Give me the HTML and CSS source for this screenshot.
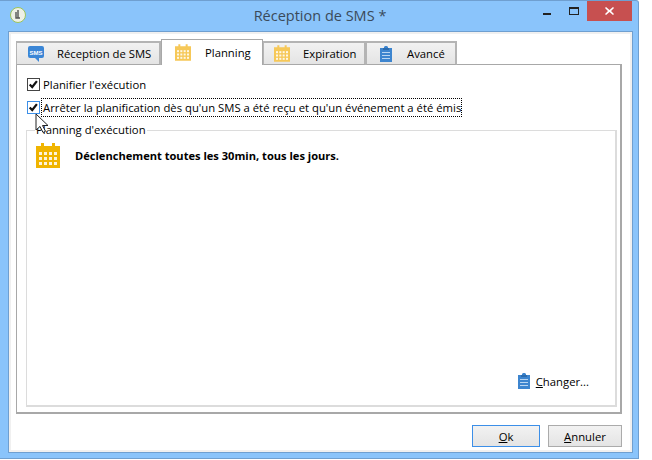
FILE: index.html
```html
<!DOCTYPE html>
<html lang="fr">
<head>
<meta charset="utf-8">
<title>Réception de SMS</title>
<link rel="stylesheet" href="styles.css">
</head>
<body>
<svg width="0" height="0" class="defs">
  <defs>
    <symbol id="cal" viewBox="0 0 24 25">
      <path d="M0 3h5V0h3v3h8V0h3v3h5v22H0z" fill="currentColor"/>
      <g fill="#fff" fill-opacity=".85">
        <rect x="3" y="9" width="3" height="3"/><rect x="8" y="9" width="3" height="3"/><rect x="13" y="9" width="3" height="3"/><rect x="18" y="9" width="3" height="3"/>
        <rect x="3" y="14" width="3" height="3"/><rect x="8" y="14" width="3" height="3"/><rect x="13" y="14" width="3" height="3"/><rect x="18" y="14" width="3" height="3"/>
        <rect x="3" y="19" width="3" height="3"/><rect x="8" y="19" width="3" height="3"/><rect x="13" y="19" width="3" height="3"/><rect x="18" y="19" width="3" height="3"/>
      </g>
    </symbol>
    <symbol id="clip" viewBox="0 0 12 16">
      <path d="M0 2h4V1l1-1h2l1 1v1h4v14H0z" fill="#3d85cf"/>
      <path d="M3 2h6v2H3z" fill="#2c6cae"/>
      <path d="M2 6h8v1H2zM2 9h8v1H2zM2 12h8v1H2z" fill="#b9d6f2"/>
    </symbol>
    <symbol id="check" viewBox="0 0 13 13">
      <path d="M2 6.500l3 3 5.500-7" fill="none" stroke="#111" stroke-width="2.600"/>
    </symbol>
  </defs>
</svg>

<main class="window">
  <header class="titlebar">
    <svg class="app-icon" width="16" height="16" viewBox="0 0 16 16">
      <circle cx="8" cy="8" r="7.500" fill="#eef0e6" stroke="#9cc45a"/>
      <path d="M8 3v8M6 5v6h4" fill="none" stroke="#555" stroke-width="1.400"/>
    </svg>
    <h1 class="title">Réception de SMS *</h1>
    <div class="controls">
      <span class="ctl-min"></span>
      <span class="ctl-max"></span>
      <span class="ctl-close">
        <svg width="9" height="8" viewBox="0 0 9 8"><path d="M1 0l3.500 3L8 0l1 1-3 3 3 3-1 1-3.500-3L1 8 0 7l3-3-3-3z" fill="#fff"/></svg>
      </span>
    </div>
  </header>

  <div class="client">
    <nav class="tabs">
      <div class="tab tab-sms">
        <svg class="tab-icon" width="16" height="16" viewBox="0 0 16 16">
          <path d="M2 0h12a2 2 0 0 1 2 2v8a2 2 0 0 1-2 2h-3v4l-4-4H2a2 2 0 0 1-2-2V2a2 2 0 0 1 2-2z" fill="#3b86d6"/>
          <text x="8" y="8.500" class="sms-txt" text-anchor="middle">SMS</text>
        </svg>
        <span>Réception de SMS</span>
      </div>
      <div class="tab active tab-plan">
        <svg class="tab-icon cal-light" width="16" height="17"><use href="#cal"/></svg>
        <span>Planning</span>
      </div>
      <div class="tab tab-exp">
        <svg class="tab-icon cal-light" width="16" height="17"><use href="#cal"/></svg>
        <span>Expiration</span>
      </div>
      <div class="tab tab-adv">
        <svg class="tab-icon" width="12" height="16"><use href="#clip"/></svg>
        <span>Avancé</span>
      </div>
    </nav>

    <section class="panel">
      <label class="check first">
        <span class="box"><svg width="11" height="11" viewBox="0 0 13 13"><use href="#check"/></svg></span>
        <span class="lbl">Planifier l'exécution</span>
      </label>
      <label class="check second">
        <span class="box focus"><svg width="11" height="11" viewBox="0 0 13 13"><use href="#check"/></svg></span>
        <span class="lbl dotted">Arrêter la planification dès qu'un SMS a été reçu et qu'un événement a été émis</span>
      </label>

      <section class="group">
        <h2 class="legend">Planning d'exécution</h2>
        <div class="summary">
          <svg class="cal-strong" width="24" height="25"><use href="#cal"/></svg>
          <strong>Déclenchement toutes les 30min, tous les jours.</strong>
        </div>
        <div class="change">
          <svg width="12" height="16"><use href="#clip"/></svg>
          <span><u>C</u>hanger...</span>
        </div>
      </section>
    </section>

    <footer class="actions">
      <button class="btn ok" type="button"><u>O</u>k</button>
      <button class="btn cancel" type="button"><u>A</u>nnuler</button>
    </footer>
  </div>
</main>

<svg class="cursor" width="14" height="21" viewBox="0 0 14 21">
  <path d="M1 1v16l4-3.500 3 6 2.500-1.200-3-5.800H13z" fill="#fff" stroke="#222" stroke-width="1"/>
</svg>
</body>
</html>
```

FILE: styles.css
```css
* { box-sizing: border-box; }

html, body {
  margin: 0;
  padding: 0;
  background: #fff;
}

body {
  width: 652px;
  height: 460px;
  overflow: hidden;
  position: relative;
  font-family: "Open Sans", "Noto Sans", sans-serif;
  font-size: 11.300px;
  color: #000;
}

.defs { position: absolute; }

.window {
  width: 639px;
  height: 459px;
  background: #8ac4fb;
  border: 1px solid #6f9fd0;
  border-left: 0;
  border-top-right-radius: 3px;
  display: flex;
  flex-direction: column;
}

.titlebar {
  height: 30px;
  flex: none;
  display: flex;
  align-items: flex-start;
  padding-left: 10px;
}

.app-icon { margin-top: 6px; flex: none; }

.title {
  flex: 1;
  margin: 0;
  padding: 4px 0 0 71px;
  text-align: center;
  font-size: 14.500px;
  font-weight: 400;
  line-height: 22px;
  color: #3a4a5a;
}

.controls {
  display: flex;
  align-items: flex-start;
  margin-right: 6px;
  height: 20px;
}

.ctl-min {
  width: 8px;
  height: 2px;
  margin: 12px 18px 0 0;
  background: #222;
}

.ctl-max {
  width: 10px;
  height: 8px;
  margin: 6px 8px 0 0;
  border: 1px solid #222;
  border-top-width: 2px;
}

.ctl-close {
  width: 45px;
  height: 20px;
  background: #c75050;
  display: flex;
  align-items: center;
  justify-content: center;
}

.client {
  width: 625px;
  height: 422px;
  margin-left: 8px;
  border: 1px solid #6f9fd0;
  background: #fff;
  box-shadow: inset 2px 2px 0 #f0f0f0, inset -2px -2px 0 #f0f0f0;
  padding: 8px 10px 0 7px;
  display: flex;
  flex-direction: column;
}

.tabs {
  display: flex;
  align-items: flex-end;
  height: 25px;
  position: relative;
  z-index: 1;
  margin-bottom: -1px;
}

.tab {
  height: 24px;
  display: flex;
  align-items: center;
  border: 2px solid #b4b4b4;
  border-bottom: 1px solid #a8a8a8;
  border-left-width: 1px;
  background: linear-gradient(#f2f2f2, #e4e4e4);
}

.tab.active {
  height: 26px;
  background: #fff;
  border: 1px solid #a8a8a8;
  border-bottom: 0;
}

.tab-icon { flex: none; }

.cal-light { color: #f6c858; }

.tab-sms  { width: 145px; padding-left: 11px; gap: 13px; }
.tab-plan { width: 102px; padding-left: 13px; gap: 14px; }
.tab-exp  { width: 103px; padding-left: 10px; gap: 13px; }
.tab-adv  { width: 91px;  padding-left: 13px; gap: 15px; }

.sms-txt {
  font-family: "Liberation Sans", sans-serif;
  font-size: 6px;
  font-weight: 700;
  fill: #fff;
}

.panel {
  width: 606px;
  height: 350px;
  border: 1px solid #a8a8a8;
  border-width: 1px 2px 2px 1px;
  padding: 11px 3px 0 9px;
  display: flex;
  flex-direction: column;
}

.check {
  display: flex;
  align-items: center;
  height: 17px;
  margin-left: 1px;
}

.first { margin-bottom: 6px; }

.box {
  width: 13px;
  height: 13px;
  flex: none;
  margin-right: 2px;
  border: 1px solid #444;
  background: #fff;
  display: flex;
}

.box.focus {
  border-color: #3c8fe8;
}

.lbl { padding: 0 1px; line-height: 15px; white-space: nowrap; }

.lbl.dotted {
  outline: 1px dotted #000;
  line-height: 17px;
  width: 419px;
}

.group {
  flex: 1;
  margin: 14px 0 5px 0;
  border: 2px solid #dcdcdc;
  border-width: 1px 2px 2px 1px;
  display: flex;
  flex-direction: column;
  justify-content: space-between;
}

.legend {
  align-self: flex-start;
  margin: -9px 0 0 8px;
  padding: 0 1px;
  background: #fff;
  font-size: inherit;
  font-weight: 400;
  line-height: 16px;
}

.summary {
  display: flex;
  align-items: center;
  gap: 15px;
  padding: 5px 0 0 9px;
  margin-bottom: auto;
  font-size: 11.100px;
}

.cal-strong { color: #f0b400; flex: none; }

.summary strong { font-weight: 700; }

.change {
  display: flex;
  align-items: center;
  gap: 6px;
  align-self: flex-end;
  margin: 0 26px 16px 0;
}

.actions {
  display: flex;
  justify-content: flex-end;
  gap: 8px;
  padding: 11px 0 0 0;
}

.btn {
  height: 22px;
  padding: 0;
  font-family: inherit;
  font-size: inherit;
  color: #000;
  background: linear-gradient(#f2f2f2, #e4e4e4);
  border: 1px solid #ababab;
}

.btn.ok { width: 68px; border-color: #3c8fe8; }
.btn.cancel { width: 74px; }

.cursor {
  position: absolute;
  left: 35px;
  top: 113px;
  z-index: 5;
}
```
